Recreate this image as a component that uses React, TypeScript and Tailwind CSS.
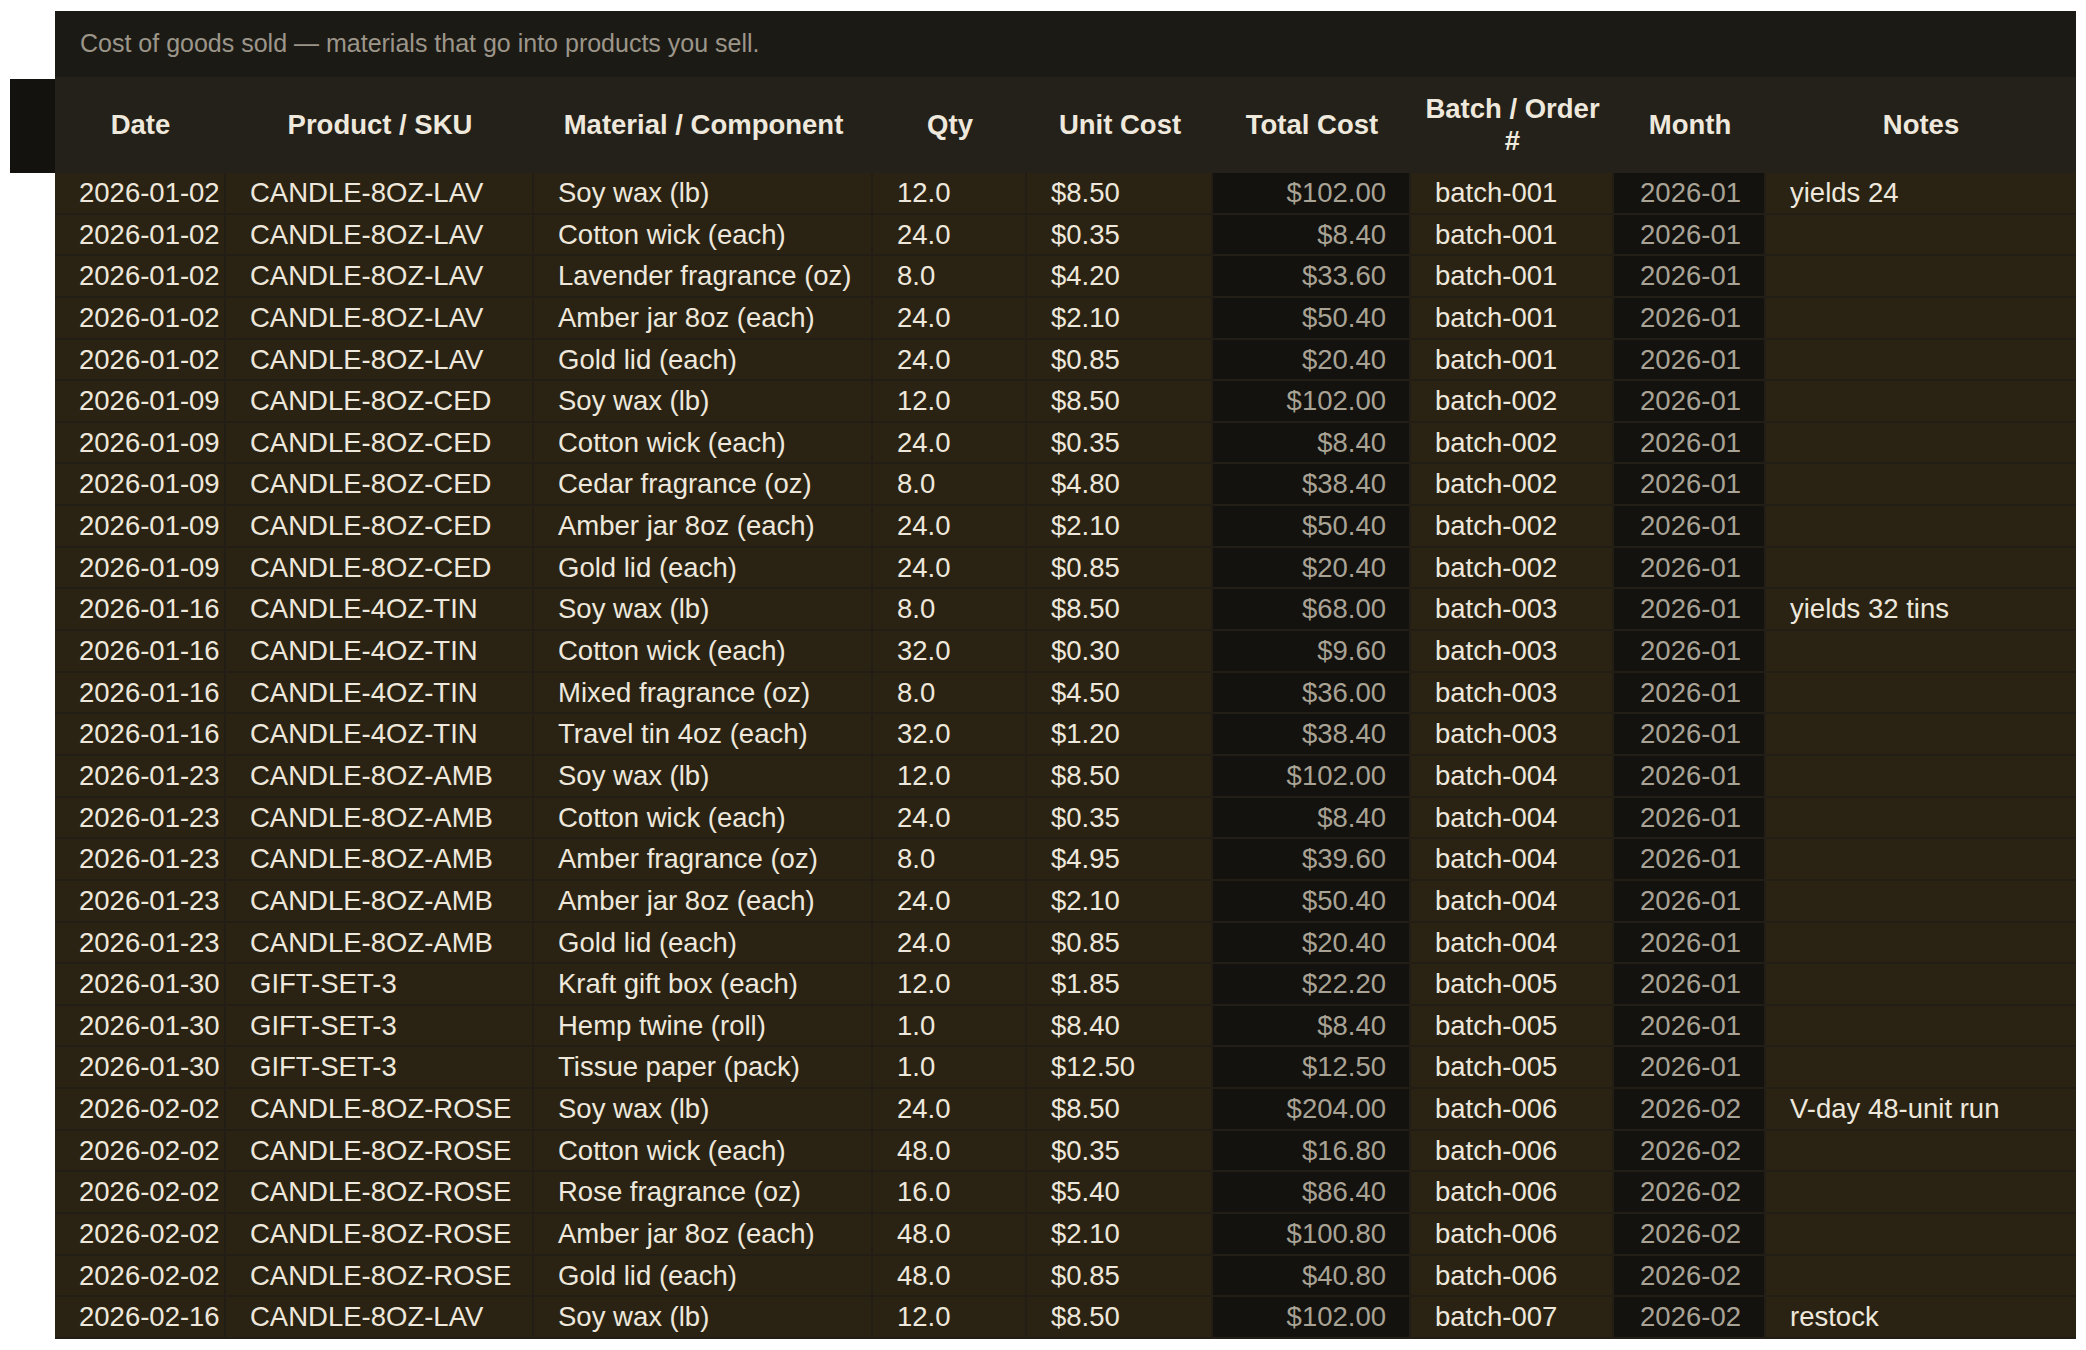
import React from 'react';

type Row = {
  date: string;
  sku: string;
  material: string;
  qty: string;
  unit: string;
  total: string;
  batch: string;
  month: string;
  notes?: string;
};

const rows: Row[] = [
  { date: '2026-01-02', sku: 'CANDLE-8OZ-LAV', material: 'Soy wax (lb)', qty: '12.0', unit: '$8.50', total: '$102.00', batch: 'batch-001', month: '2026-01', notes: 'yields 24' },
  { date: '2026-01-02', sku: 'CANDLE-8OZ-LAV', material: 'Cotton wick (each)', qty: '24.0', unit: '$0.35', total: '$8.40', batch: 'batch-001', month: '2026-01' },
  { date: '2026-01-02', sku: 'CANDLE-8OZ-LAV', material: 'Lavender fragrance (oz)', qty: '8.0', unit: '$4.20', total: '$33.60', batch: 'batch-001', month: '2026-01' },
  { date: '2026-01-02', sku: 'CANDLE-8OZ-LAV', material: 'Amber jar 8oz (each)', qty: '24.0', unit: '$2.10', total: '$50.40', batch: 'batch-001', month: '2026-01' },
  { date: '2026-01-02', sku: 'CANDLE-8OZ-LAV', material: 'Gold lid (each)', qty: '24.0', unit: '$0.85', total: '$20.40', batch: 'batch-001', month: '2026-01' },
  { date: '2026-01-09', sku: 'CANDLE-8OZ-CED', material: 'Soy wax (lb)', qty: '12.0', unit: '$8.50', total: '$102.00', batch: 'batch-002', month: '2026-01' },
  { date: '2026-01-09', sku: 'CANDLE-8OZ-CED', material: 'Cotton wick (each)', qty: '24.0', unit: '$0.35', total: '$8.40', batch: 'batch-002', month: '2026-01' },
  { date: '2026-01-09', sku: 'CANDLE-8OZ-CED', material: 'Cedar fragrance (oz)', qty: '8.0', unit: '$4.80', total: '$38.40', batch: 'batch-002', month: '2026-01' },
  { date: '2026-01-09', sku: 'CANDLE-8OZ-CED', material: 'Amber jar 8oz (each)', qty: '24.0', unit: '$2.10', total: '$50.40', batch: 'batch-002', month: '2026-01' },
  { date: '2026-01-09', sku: 'CANDLE-8OZ-CED', material: 'Gold lid (each)', qty: '24.0', unit: '$0.85', total: '$20.40', batch: 'batch-002', month: '2026-01' },
  { date: '2026-01-16', sku: 'CANDLE-4OZ-TIN', material: 'Soy wax (lb)', qty: '8.0', unit: '$8.50', total: '$68.00', batch: 'batch-003', month: '2026-01', notes: 'yields 32 tins' },
  { date: '2026-01-16', sku: 'CANDLE-4OZ-TIN', material: 'Cotton wick (each)', qty: '32.0', unit: '$0.30', total: '$9.60', batch: 'batch-003', month: '2026-01' },
  { date: '2026-01-16', sku: 'CANDLE-4OZ-TIN', material: 'Mixed fragrance (oz)', qty: '8.0', unit: '$4.50', total: '$36.00', batch: 'batch-003', month: '2026-01' },
  { date: '2026-01-16', sku: 'CANDLE-4OZ-TIN', material: 'Travel tin 4oz (each)', qty: '32.0', unit: '$1.20', total: '$38.40', batch: 'batch-003', month: '2026-01' },
  { date: '2026-01-23', sku: 'CANDLE-8OZ-AMB', material: 'Soy wax (lb)', qty: '12.0', unit: '$8.50', total: '$102.00', batch: 'batch-004', month: '2026-01' },
  { date: '2026-01-23', sku: 'CANDLE-8OZ-AMB', material: 'Cotton wick (each)', qty: '24.0', unit: '$0.35', total: '$8.40', batch: 'batch-004', month: '2026-01' },
  { date: '2026-01-23', sku: 'CANDLE-8OZ-AMB', material: 'Amber fragrance (oz)', qty: '8.0', unit: '$4.95', total: '$39.60', batch: 'batch-004', month: '2026-01' },
  { date: '2026-01-23', sku: 'CANDLE-8OZ-AMB', material: 'Amber jar 8oz (each)', qty: '24.0', unit: '$2.10', total: '$50.40', batch: 'batch-004', month: '2026-01' },
  { date: '2026-01-23', sku: 'CANDLE-8OZ-AMB', material: 'Gold lid (each)', qty: '24.0', unit: '$0.85', total: '$20.40', batch: 'batch-004', month: '2026-01' },
  { date: '2026-01-30', sku: 'GIFT-SET-3', material: 'Kraft gift box (each)', qty: '12.0', unit: '$1.85', total: '$22.20', batch: 'batch-005', month: '2026-01' },
  { date: '2026-01-30', sku: 'GIFT-SET-3', material: 'Hemp twine (roll)', qty: '1.0', unit: '$8.40', total: '$8.40', batch: 'batch-005', month: '2026-01' },
  { date: '2026-01-30', sku: 'GIFT-SET-3', material: 'Tissue paper (pack)', qty: '1.0', unit: '$12.50', total: '$12.50', batch: 'batch-005', month: '2026-01' },
  { date: '2026-02-02', sku: 'CANDLE-8OZ-ROSE', material: 'Soy wax (lb)', qty: '24.0', unit: '$8.50', total: '$204.00', batch: 'batch-006', month: '2026-02', notes: 'V-day 48-unit run' },
  { date: '2026-02-02', sku: 'CANDLE-8OZ-ROSE', material: 'Cotton wick (each)', qty: '48.0', unit: '$0.35', total: '$16.80', batch: 'batch-006', month: '2026-02' },
  { date: '2026-02-02', sku: 'CANDLE-8OZ-ROSE', material: 'Rose fragrance (oz)', qty: '16.0', unit: '$5.40', total: '$86.40', batch: 'batch-006', month: '2026-02' },
  { date: '2026-02-02', sku: 'CANDLE-8OZ-ROSE', material: 'Amber jar 8oz (each)', qty: '48.0', unit: '$2.10', total: '$100.80', batch: 'batch-006', month: '2026-02' },
  { date: '2026-02-02', sku: 'CANDLE-8OZ-ROSE', material: 'Gold lid (each)', qty: '48.0', unit: '$0.85', total: '$40.80', batch: 'batch-006', month: '2026-02' },
  { date: '2026-02-16', sku: 'CANDLE-8OZ-LAV', material: 'Soy wax (lb)', qty: '12.0', unit: '$8.50', total: '$102.00', batch: 'batch-007', month: '2026-02', notes: 'restock' },
];

// column widths measured off the sheet
const cols = [171, 308, 339, 154, 186, 198, 203, 152, 310];

const td = 'h-[41.64px] py-[4px] px-[24px] leading-[31.64px] border-b-2 border-r-2 border-[#221e16] whitespace-nowrap overflow-hidden';
const tdCalc = 'h-[41.64px] py-[4px] pl-[12px] pr-[23px] leading-[31.64px] border-b-2 border-r-2 border-[#221e16] whitespace-nowrap text-right bg-[#13120f] text-[#a9a395]';
const th = 'h-[96px] px-[12px] font-bold text-center align-middle leading-[31.6px]';

export default function App() {
  return (
    <div className="min-h-screen bg-white pt-[11px] pl-[55px] font-['Liberation_Sans',Arial,sans-serif]">
      <div className="w-[2021px] bg-[#1c1a15]">
        <div className="h-[66px] flex items-center px-[25px] text-[25px] text-[#9c968a]">
          Cost of goods sold — materials that go into products you sell.
        </div>
        <table className="table-fixed w-[2021px] border-separate border-spacing-0 text-[27.5px] text-[#eee8dc]">
          <colgroup>
            {cols.map((w, i) => (
              <col key={i} style={{ width: w }} />
            ))}
          </colgroup>
          <thead>
            <tr className="bg-[#24201a] text-[#efe9dd]">
              <th className={`${th} relative`}>
                <div className="absolute -left-[45px] top-[2px] bottom-0 w-[45px] bg-[#13120e]" />
                Date
              </th>
              <th className={th}>Product / SKU</th>
              <th className={th}>Material / Component</th>
              <th className={th}>Qty</th>
              <th className={th}>Unit Cost</th>
              <th className={th}>Total Cost</th>
              <th className={th}>Batch / Order #</th>
              <th className={th}>Month</th>
              <th className={th}>Notes</th>
            </tr>
          </thead>
          <tbody className="bg-[#2a2314]">
            {rows.map((r, i) => (
              <tr key={i}>
                <td className={td}>{r.date}</td>
                <td className={td}>{r.sku}</td>
                <td className={td}>{r.material}</td>
                <td className={td}>{r.qty}</td>
                <td className={td}>{r.unit}</td>
                <td className={tdCalc}>{r.total}</td>
                <td className={td}>{r.batch}</td>
                <td className={tdCalc}>{r.month}</td>
                <td className="h-[41.64px] py-[4px] px-[24px] leading-[31.64px] border-b-2 border-[#221e16] whitespace-nowrap overflow-hidden">
                  {r.notes ?? ''}
                </td>
              </tr>
            ))}
          </tbody>
        </table>
      </div>
    </div>
  );
}
